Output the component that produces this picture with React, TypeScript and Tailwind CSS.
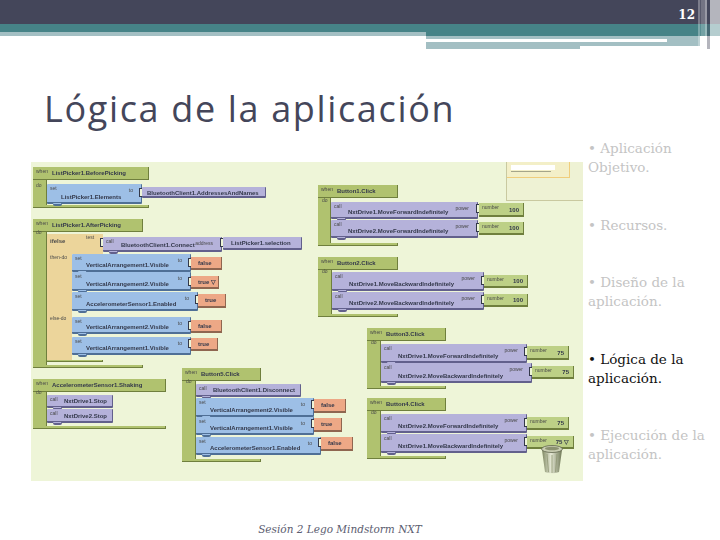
import * as React from "react"

type Kind = "green" | "blue" | "purple" | "tan" | "orange" | "number"

interface Block {
  kind: Kind
  x: number
  y: number
  w: number
  h: number
  text?: string
  textX?: number
  label?: string
  side?: string
  value?: string
  plug?: boolean
}

const kindClass: Record<Kind, string> = {
  green: "bg-[#b0c26f] border-b border-r border-[#6f7f3d]",
  blue: "bg-[#9dbfe6] border-b-2 border-r border-[#4f6f96] rounded-[1px]",
  purple: "bg-[#b5b2da] border-b-2 border-r border-[#62608c] rounded-[1px]",
  tan: "bg-[#ecd59b]",
  orange: "bg-[#eda886] border-b-2 border-r border-[#8f6650]",
  number: "bg-[#bdd086] border-b-2 border-r border-[#6f7f3d]",
}

// every event block is a hat, a spine and a foot
function event(x: number, y: number, w: number, spine: number, bottom: number, text: string): Block[] {
  return [
    { kind: "green", x, y, w: spine, h: bottom - y },
    { kind: "green", x, y: bottom - 3, w, h: 3 },
    { kind: "green", x, y, w, h: 13, text, textX: 19, label: "when" },
  ]
}

function call(x: number, y: number, w: number, h: number, text: string, side = "power"): Block {
  return { kind: "purple", x, y, w, h, text, textX: 17, label: "call", side }
}

function set(x: number, y: number, w: number, h: number, text: string, side = "to"): Block {
  return { kind: "blue", x, y, w, h, text, textX: 14, label: "set", side }
}

function num(x: number, y: number, w: number, h: number, value: string): Block {
  return { kind: "number", x, y, w, h, label: "number", value, plug: true }
}

function bool(x: number, y: number, w: number, h: number, text: string): Block {
  return { kind: "orange", x, y, w, h, text, textX: 7, plug: true }
}

const blocks: Block[] = [
  ...event(33, 167, 116, 14, 208, "ListPicker1.BeforePicking"),
  set(47, 184, 95, 20, "ListPicker1.Elements"),
  { kind: "purple", x: 142, y: 187, w: 124, h: 11, text: "BluetoothClient1.AddressesAndNames", textX: 5, plug: true },

  ...event(33, 219, 110, 14, 368, "ListPicker1.AfterPicking"),
  { kind: "tan", x: 47, y: 234, w: 25, h: 128 },
  { kind: "tan", x: 47, y: 234, w: 56, h: 20 },
  { kind: "green", x: 47, y: 360, w: 56, h: 2 },
  { kind: "purple", x: 103, y: 237, w: 119, h: 15, text: "BluetoothClient1.Connect", textX: 18, label: "call", side: "address", plug: true },
  { kind: "purple", x: 223, y: 237, w: 79, h: 13, text: "ListPicker1.selection", textX: 8, plug: true },
  set(72, 254, 119, 18, "VerticalArrangement1.Visible"),
  bool(191, 257, 31, 13, "false"),
  set(72, 272, 119, 19, "VerticalArrangement2.Visible"),
  bool(191, 276, 28, 13, "true ▽"),
  set(72, 292, 126, 19, "AccelerometerSensor1.Enabled"),
  bool(198, 294, 28, 14, "true"),
  set(72, 317, 119, 17, "VerticalArrangement2.Visible"),
  bool(191, 320, 31, 13, "false"),
  set(72, 337, 119, 18, "VerticalArrangement1.Visible"),
  bool(191, 338, 27, 13, "true"),

  ...event(33, 379, 133, 14, 429, "AccelerometerSensor1.Shaking"),
  call(47, 395, 66, 13, "NxtDrive1.Stop", ""),
  call(47, 409, 66, 14, "NxtDrive2.Stop", ""),

  ...event(182, 368, 79, 14, 462, "Button5.Click"),
  call(196, 384, 105, 13, "BluetoothClient1.Disconnect", ""),
  set(196, 398, 118, 19, "VerticalArrangement2.Visible"),
  bool(314, 399, 32, 14, "false"),
  set(196, 417, 118, 18, "VerticalArrangement1.Visible"),
  bool(314, 418, 28, 14, "true"),
  set(196, 437, 125, 18, "AccelerometerSensor1.Enabled"),
  bool(321, 437, 32, 14, "false"),

  ...event(318, 185, 80, 13, 246, "Button1.Click"),
  call(331, 202, 147, 17, "NxtDrive1.MoveForwardIndefinitely"),
  num(479, 203, 45, 14, "100"),
  call(331, 220, 147, 18, "NxtDrive2.MoveForwardIndefinitely"),
  num(479, 222, 45, 13, "100"),

  ...event(318, 257, 80, 14, 317, "Button2.Click"),
  call(332, 272, 152, 19, "NxtDrive1.MoveBackwardIndefinitely"),
  num(484, 275, 44, 13, "100"),
  call(332, 292, 152, 18, "NxtDrive2.MoveBackwardIndefinitely"),
  num(484, 294, 44, 13, "100"),

  ...event(367, 328, 79, 14, 389, "Button3.Click"),
  call(381, 344, 146, 19, "NxtDrive1.MoveForwardIndefinitely"),
  num(527, 346, 42, 14, "75"),
  call(381, 363, 151, 20, "NxtDrive2.MoveBackwardIndefinitely"),
  num(532, 366, 42, 13, "75"),

  ...event(367, 398, 79, 14, 459, "Button4.Click"),
  call(381, 414, 146, 19, "NxtDrive2.MoveForwardIndefinitely"),
  num(527, 417, 42, 13, "75"),
  call(381, 434, 146, 19, "NxtDrive1.MoveBackwardIndefinitely"),
  num(527, 436, 47, 13, "75 ▽"),
]

// small captions that sit on the canvas, in page coordinates
const captions: [number, number, string][] = [
  [36, 185, "do"],
  [36, 232, "do"],
  [36, 392, "do"],
  [186, 381, "do"],
  [322, 200, "do"],
  [322, 271, "do"],
  [371, 342, "do"],
  [371, 412, "do"],
  [50, 257, "then-do"],
  [50, 318, "else-do"],
  [86, 237, "test"],
]

const bullets = [
  { text: "Aplicación Objetivo." },
  { text: "Recursos." },
  { text: "Diseño de la aplicación." },
  { text: "Lógica de la aplicación.", active: true },
  { text: "Ejecución de la aplicación." },
]

function BlockNode({ b }: { b: Block }) {
  const statement = b.label === "call" || b.label === "set"
  const low = b.kind === "number" || statement
  return (
    <>
      <div
        className={`absolute overflow-hidden ${kindClass[b.kind]}`}
        style={{ left: b.x - 31, top: b.y - 162, width: b.w, height: b.h }}
      >
        {b.label && (
          <span className="absolute left-[3px] top-0 text-[5px] leading-[8px] text-[#4a4a4a]">{b.label}</span>
        )}
        {b.text && (
          <span
            className={`absolute whitespace-nowrap text-[6px] font-bold leading-[9px] text-[#33384a] ${
              low ? "bottom-0" : "top-[2px]"
            }`}
            style={{ left: b.textX }}
          >
            {b.text}
          </span>
        )}
        {b.side && (
          <span className="absolute right-[8px] top-[2px] text-[5px] leading-[8px] text-[#4a4a4a]">{b.side}</span>
        )}
        {b.value && (
          <span className="absolute bottom-0 right-[4px] text-[6px] font-bold leading-[9px] text-[#33384a]">
            {b.value}
          </span>
        )}
      </div>
      {/* the socket bracket in front of a value and the tab under a statement */}
      {b.plug && (
        <div
          className="absolute h-[9px] w-[3px] border-y border-l border-[#33384a] bg-[#eef5d8]"
          style={{ left: b.x - 34, top: b.y - 161 }}
        />
      )}
      {statement && (
        <div
          className={`absolute h-[3px] w-[9px] rounded-b-[2px] ${kindClass[b.kind]}`}
          style={{ left: b.x - 25, top: b.y + b.h - 163 }}
        />
      )}
    </>
  )
}

function Trash() {
  return (
    <svg className="absolute left-[510px] top-[283px]" width="22" height="29" viewBox="0 0 22 29">
      <defs>
        <linearGradient id="can" x1="0" x2="1" y1="0" y2="0">
          <stop offset="0" stopColor="#7d8660" />
          <stop offset="0.45" stopColor="#e6e9d6" />
          <stop offset="1" stopColor="#6f7856" />
        </linearGradient>
      </defs>
      <path d="M1 5 L4 27 Q11 29.5 18 27 L21 5 Q11 9 1 5Z" fill="url(#can)" />
      <path d="M6 9 L7.5 27 M11 10 V28 M16 9 L14.5 27" stroke="#8f9775" strokeWidth="0.8" />
      <ellipse cx="11" cy="4" rx="10.5" ry="3.5" fill="#c9cdb2" stroke="#5f654c" strokeWidth="0.8" />
      <ellipse cx="11" cy="3.5" rx="7" ry="1.8" fill="#8b9170" />
    </svg>
  )
}

function Canvas() {
  return (
    <div className="relative h-[319px] w-[552px] overflow-hidden bg-[#eef5d8] font-['Liberation_Sans',sans-serif] blur-[0.4px]">
      {/* minimap in the top right corner */}
      <div className="absolute left-[475px] top-0 h-[39px] w-[77px] border-b border-l border-[#c9c9a0] bg-[#eef2d4]">
        <div className="h-[16px] w-[63px] border-b border-r border-[#f0cd7c] bg-[#f3efc8] pl-[4px] pt-[3px]">
          <div className="h-[5px] w-[44px] bg-white" />
          <div className="mt-[1px] h-[1px] w-[40px] bg-[#a5a58a]" />
        </div>
      </div>
      {blocks.map((b, i) => (
        <BlockNode key={i} b={b} />
      ))}
      <span className="absolute left-[19px] top-[75px] text-[6px] font-bold leading-[8px] text-[#4a4a4a]">ifelse</span>
      {captions.map(([x, y, text], i) => (
        <span
          key={i}
          className="absolute text-[5px] leading-[8px] text-[#4a4a4a]"
          style={{ left: x - 31, top: y - 162 - 4 }}
        >
          {text}
        </span>
      ))}
      <Trash />
    </div>
  )
}

export default function App() {
  return (
    <div className="relative flex h-[540px] w-[720px] flex-col overflow-hidden bg-white">
      <header className="relative h-[49px] shrink-0">
        <div className="flex h-6 items-center justify-end bg-[#44465a] pr-[25px] pt-[6px]">
          <span className="font-['DejaVu_Serif',serif] text-[12px] font-bold leading-none text-white">12</span>
        </div>
        <div className="h-2 bg-[#468387]" />
        <div className="flex h-1">
          <div className="w-[426px] bg-[#a3bfc3]" />
          <div className="flex-1 bg-[#468387]" />
        </div>
        <div className="ml-[426px] w-[274px]">
          <div className="h-[3px] bg-[#a3bfc3]" />
          <div className="flex h-[3px]">
            <div className="w-[241px] bg-white" />
            <div className="flex-1 bg-[#a3bfc3]" />
          </div>
          <div className="h-[4px] bg-[#a3bfc3]" />
          <div className="h-[3px] w-[154px] bg-[#a3bfc3]" />
        </div>
        {/* vertical stripes over the right end of the bands */}
        <div className="absolute right-0 top-0 flex h-[49px] w-[22px]">
          <div className="w-[2px] bg-white/30" />
          <div className="w-[1px] bg-white/10" />
          <div className="w-[4px] bg-white/25" />
          <div className="w-[2px] bg-white/45" />
          <div className="w-[3px] bg-[#44465a]/40" />
          <div className="flex-1 bg-white/60" />
        </div>
      </header>

      <h1 className="ml-[44px] mt-[37px] h-[52px] whitespace-nowrap font-['Open_Sans',sans-serif] text-[36px] leading-[46px] tracking-[1.65px] text-[#44465a]">
        Lógica de la aplicación
      </h1>

      <div className="flex h-[384px] items-start">
        <div className="ml-[31px] mt-[24px]">
          <Canvas />
        </div>
        <ul className="ml-[5px] flex w-[126px] flex-col gap-[38.5px] pt-[1px] font-['DejaVu_Serif',serif] text-[13.5px] font-light leading-[19px] text-[#c4c4c4]">
          {bullets.map((item) => (
            <li key={item.text} className={item.active ? "text-[#111]" : ""}>
              • {item.text}
            </li>
          ))}
        </ul>
      </div>

      <footer className="mr-[40px] text-center font-['DejaVu_Serif',serif] text-[10.5px] italic leading-[14px] text-[#5b5d70]">
        Sesión 2 Lego Mindstorm NXT
      </footer>
    </div>
  )
}
